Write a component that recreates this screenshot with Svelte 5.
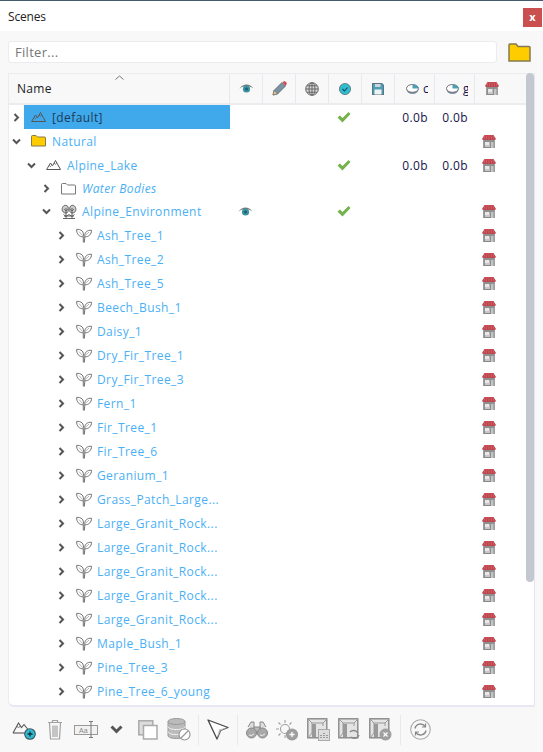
<script lang="ts">
	const trunc = 'Large_Granit_Rock...';
	const leaves = [
		'Ash_Tree_1', 'Ash_Tree_2', 'Ash_Tree_5', 'Beech_Bush_1', 'Daisy_1', 'Dry_Fir_Tree_1',
		'Dry_Fir_Tree_3', 'Fern_1', 'Fir_Tree_1', 'Fir_Tree_6', 'Geranium_1', 'Grass_Patch_Large...',
		trunc, trunc, trunc, trunc, trunc, 'Maple_Bush_1', 'Pine_Tree_3', 'Pine_Tree_6_young'
	];

	const rows = [
		{ name: '[default]', depth: 0, icon: 'scene', open: false, selected: true, check: true, sizes: true, store: false },
		{ name: 'Natural', depth: 0, icon: 'folderFull', open: true, store: true },
		{ name: 'Alpine_Lake', depth: 1, icon: 'scene', open: true, check: true, sizes: true, store: true },
		{ name: 'Water Bodies', depth: 2, icon: 'folder', open: false, italic: true, tight: true, store: false },
		{ name: 'Alpine_Environment', depth: 2, icon: 'trees', open: true, eye: true, check: true, tight: true, store: true },
		...leaves.map((name) => ({ name, depth: 3, icon: 'leaf', open: false, store: true }))
	];
</script>

{#snippet scene()}
	<svg class="ic" width="15" height="12" viewBox="0 0 15 12" fill="none" stroke="#555" stroke-width="1">
		<path d="M.6 10.500 4.500 4l2 2.800L9.500 1.500l5 9z" />
		<path d="M3.200 6.500 4.500 7.500 5.600 6.500M8 4l1.300 1.200L10.800 4" stroke-width=".8" />
	</svg>
{/snippet}

{#snippet folderFull()}
	<svg class="ic" width="15" height="12" viewBox="0 0 15 12">
		<path d="M.5 11V1.500q0-1 1-1h3.500l1.500 1.500h7q1 0 1 1V11z" fill="#fc0" stroke="#8a7a45" />
	</svg>
{/snippet}

{#snippet folder()}
	<svg class="ic" width="15" height="12" viewBox="0 0 15 12">
		<path d="M.5 11V1.500q0-1 1-1h3.500l1.500 1.500h7q1 0 1 1V11z" fill="#fff" stroke="#777" />
	</svg>
{/snippet}

{#snippet trees()}
	<svg class="ic wide" width="16" height="15" viewBox="0 0 16 15" fill="none" stroke="#555" stroke-width=".9">
		<path d="M5 9C1.500 9 .5 6 1.500 3.500 2.500 .8 6 .5 7 3 8 6.500 7 9 5 9z" fill="#ccc" />
		<path d="M11 9c3.500 0 4.500-3 3.500-5.500C13.500 .8 10 .5 9 3 8 6.500 9 9 11 9z" fill="#ccc" />
		<path d="M5 4v10M11 4v10M2 14.500h12M3 12h10M2.500 10.500l2.500 2 3-2 3 2 2.500-2" />
		<path d="M3 5l2 2 2-2M9 5l2 2 2-2" stroke-width=".7" />
	</svg>
{/snippet}

{#snippet leaf()}
	<svg class="ic wide" width="16" height="15" viewBox="0 0 16 15" fill="none" stroke="#6a6a6a" stroke-width=".95">
		<path d="M7.300 14.500V9M8.300 14.500 8.800 9" />
		<path d="M7.200 8.800C3 8.800.6 6 .6 1.500 5 .8 8.500 3.500 7.200 8.800z" />
		<path d="M8.800 8.800c4 .2 6.600-2.500 6.800-6.500C11.400 1.800 8 4.500 8.800 8.800z" />
		<path d="M3 3.500 6.500 7.500M13 4 9.500 7.500" stroke-width=".7" stroke="#999" />
	</svg>
{/snippet}

{#snippet store()}
	<svg class="store" width="14" height="13" viewBox="0 0 14 13">
		<rect x="1.500" y="4" width="11" height="9" fill="#8f8f8f" stroke="#777" stroke-width=".5" />
		<rect x="3" y="7" width="4.500" height="3" fill="#e8e8e8" />
		<rect x="3" y="10.500" width="5" height="1" fill="#fff" />
		<rect x="9" y="7" width="2.500" height="6" fill="#c4c4c4" />
		<path d="M2.500 0h9L14 4q-1 1.500-2.300.7-1 .8-2.200 0-1 .8-2.500 0-1.200.8-2.500 0-1 .8-2.200 0Q1 5.500 0 4z" fill="#b8434b" />
		<path d="M5 .3 4.300 4.500M7 .3v4.300M9 .3l.7 4.200M3 .5 1.800 4.500M11 .5l1.200 4" stroke="#e2636b" stroke-width=".8" />
	</svg>
{/snippet}

{#snippet eye()}
	<svg width="15" height="9" viewBox="0 0 15 9">
		<path d="M.3 5C2.500 1.500 5 .5 7.500 .5s5 1 7.200 4.500C12.500 2.800 10 2 7.500 2S2.500 2.800 .3 5z" fill="#777" />
		<circle cx="7.500" cy="5" r="3.600" fill="#3a93a3" />
		<circle cx="7.500" cy="5" r="1.500" fill="#1f5f6e" />
	</svg>
{/snippet}

{#snippet pie(letter)}
	<span class="pie">
		<svg width="13" height="10" viewBox="0 0 13 10">
			<ellipse cx="6.500" cy="5.500" rx="6" ry="4.500" fill="#7f8f9b" />
			<ellipse cx="6.500" cy="4.400" rx="6" ry="3.900" fill="#fff" stroke="#667" stroke-width=".9" />
			<path d="M6.500 4.400V.5a6 3.900 0 0 1 6 3.900z" fill="#4c9fb2" />
		</svg>
		<span class="pie-letter">{letter}</span>
	</span>
{/snippet}

<div class="panel">
	<header class="title">
		<span>Scenes</span>
		<button class="close">x</button>
	</header>

	<div class="filter-row">
		<input class="filter" placeholder="Filter..." />
		<svg class="browse" width="23" height="19" viewBox="0 0 23 19">
			<path d="M1 18V2q0-1 1-1h6l2 2.500h11q1 0 1 1V18z" fill="#fc0" stroke="#85794f" stroke-width="1.500" />
		</svg>
	</div>

	<div class="tree">
		<div class="head grid">
			<div class="col name">
				<svg class="sort" width="9" height="5" viewBox="0 0 9 5" fill="none" stroke="#777"><path d="M.5 4.500l4-3.500 4 3.500" /></svg>
				Name
			</div>
			<div class="col">{@render eye()}</div>
			<div class="col">
				<svg width="15" height="15" viewBox="0 0 15 15">
					<path d="M1 14l1-4.500L10 1.500 13.500 5 5.500 13z" fill="#7d93a3" stroke="#4f5d68" stroke-width=".8" />
					<path d="M1 14l1-4.500L5.500 13z" fill="#e8c89c" stroke="#665" stroke-width=".5" />
					<path d="M10.500 1 12 .3q1-.3 2 .7t.7 2L13.500 5z" fill="#d4484e" />
				</svg>
			</div>
			<div class="col">
				<svg width="14" height="14" viewBox="0 0 14 14" fill="#d8d8d8" stroke="#666" stroke-width="1">
					<circle cx="7" cy="7" r="6.300" />
					<ellipse cx="7" cy="7" rx="3" ry="6.300" fill="none" />
					<path d="M7 1v12M1 7h12M2 3.800h10M2 10.200h10" fill="none" />
				</svg>
			</div>
			<div class="col">
				<svg width="12" height="12" viewBox="0 0 12 12">
					<circle cx="6" cy="6" r="5.600" fill="#2fbcd0" stroke="#566" stroke-width=".7" />
					<path d="M3.500 6l2 2 3-3.500" fill="none" stroke="#164a5c" stroke-width="1.100" />
				</svg>
			</div>
			<div class="col">
				<svg width="12" height="12" viewBox="0 0 12 12">
					<path d="M0 0h10l2 2v10H0z" fill="#4c9fb2" />
					<path d="M.5 .5h9.300l1.700 1.700v9.300H.5z" fill="none" stroke="#667" stroke-width=".8" />
					<rect x="3" y="1" width="5.500" height="3" fill="#cfd6da" />
					<rect x="2.500" y="6.500" width="7" height="5" fill="#eef3f5" />
				</svg>
			</div>
			<div class="col pct">{@render pie('c')}</div>
			<div class="col pct">{@render pie('g')}</div>
			<div class="col">{@render store()}</div>
		</div>

		<div class="rows">
			{#each rows as row}
				<div class="row grid" class:tight={row.tight}>
					<div class="name-cell" style="padding-left: {row.depth * 15}px">
						<svg class="chev" width="15" height="9" viewBox="0 0 15 9" fill="none" stroke="#555" stroke-width="2">
							{#if row.open}<path d="M4 2.500l3.500 3.500L11 2.500" />{:else}<path d="M5.500 1l3.500 3.500L5.500 8" />{/if}
						</svg>
						<div class="label" class:selected={row.selected} class:italic={row.italic}>
							{#if row.icon === 'scene'}{@render scene()}
							{:else if row.icon === 'folderFull'}{@render folderFull()}
							{:else if row.icon === 'folder'}{@render folder()}
							{:else if row.icon === 'trees'}{@render trees()}
							{:else}{@render leaf()}{/if}
							<span class="text">{row.name}</span>
						</div>
					</div>
					<div class="val eye-val">{#if row.eye}{@render eye()}{/if}</div>
					<div class="val"></div>
					<div class="val"></div>
					<div class="val check-val">
						{#if row.check}<svg width="14" height="11" viewBox="0 0 14 11"><path d="M.5 5.500 3 3.500l2.500 2.500L11.500 0 13.500 2 5.500 10.500z" fill="#76b24c" /></svg>{/if}
					</div>
					<div class="val"></div>
					<div class="val size">{row.sizes ? '0.0b' : ''}</div>
					<div class="val size">{row.sizes ? '0.0b' : ''}</div>
					<div class="val">{#if row.store}{@render store()}{/if}</div>
				</div>
			{/each}
		</div>

		<div class="scroll"></div>
	</div>

	<div class="toolbar">
		<span class="tb">
			<svg width="24" height="21" viewBox="0 0 24 21" fill="none" stroke="#555" stroke-width="1.100">
				<path d="M1 14 6.500 4l3 4.500L12 5.500 18 13" />
				<path d="M1 14h12" />
				<path d="M4.800 7.500l1.700 1 1.500-1" stroke-width=".8" />
				<circle cx="18" cy="15" r="5.300" fill="#2fbcd0" stroke="#3c5560" />
				<path d="M15.500 15h5M18 12.500v5" stroke="#16323c" stroke-width="1.300" />
			</svg>
		</span>
		<span class="tb">
			<svg width="16" height="21" viewBox="0 0 16 21" fill="none" stroke="#a2a2a2" stroke-width="1.200">
				<path d="M1 3.500h14M5.500 3V1.500h5V3M2.500 4l1 16h9l1-16M6 6.500V18M8 6.500V18M10 6.500V18" />
			</svg>
		</span>
		<span class="tb">
			<svg width="24" height="17" viewBox="0 0 24 17">
				<rect x=".5" y="4.500" width="23" height="9" fill="#f2f2f2" stroke="#999" />
				<text x="5" y="12" font-size="7" fill="#888" font-family="Liberation Sans">Aa</text>
				<path d="M17 1v15M15 .5h4M15 16.500h4" stroke="#777" fill="none" />
			</svg>
		</span>
		<span class="tb">
			<svg width="13" height="9" viewBox="0 0 13 9" fill="none" stroke="#555" stroke-width="3"><path d="M1.500 1.500l5 5 5-5" /></svg>
		</span>
		<span class="tb">
			<svg width="20" height="20" viewBox="0 0 20 20">
				<rect x=".8" y=".8" width="14" height="14" fill="#ddd" stroke="#aaa" stroke-width="1.500" />
				<rect x="5.500" y="5.500" width="13.500" height="13.500" fill="#fff" stroke="#aaa" stroke-width="1.500" />
			</svg>
		</span>
		<span class="tb">
			<svg width="24" height="23" viewBox="0 0 24 23">
				<g fill="#bbb" stroke="#999">
					<path d="M1 3.500v14c0 2 4 3 8.500 3s8.500-1 8.500-3v-14z" />
					<ellipse cx="9.500" cy="3.500" rx="8.500" ry="3" />
				</g>
				<path d="M1 8.500c0 2 4 3 8.500 3s8.500-1 8.500-3M1 13.500c0 2 4 3 8.500 3s8.500-1 8.500-3" fill="none" stroke="#f5f5f5" />
				<circle cx="17.500" cy="16.500" r="5.500" fill="#fff" stroke="#999" stroke-width="1.200" />
				<path d="M14 20l7-7" stroke="#999" stroke-width="1.200" />
			</svg>
		</span>
		<span class="sep"></span>
		<span class="tb">
			<svg width="22" height="21" viewBox="0 0 22 21">
				<path d="M1 1l20 7.500-7.500 3L10 20z" fill="#fff" stroke="#444" stroke-width="1.300" stroke-linejoin="round" />
				<path d="M21 8.500l-7.500 3L10 20l2-9.500z" fill="#bbb" />
			</svg>
		</span>
		<span class="sep second"></span>
		<span class="tb">
			<svg width="22" height="18" viewBox="0 0 22 18" fill="#a8a8a8" stroke="#888">
				<path d="M2 6 5 1h3v7M20 6l-3-5h-3v7" fill="#ddd" />
				<rect x="8" y="6" width="6" height="5" fill="#bbb" />
				<circle cx="5.500" cy="12" r="5" />
				<circle cx="16.500" cy="12" r="5" />
				<path d="M3 14q2 1.500 5-1M14 14q2 1.500 5-1" fill="none" stroke="#eee" />
			</svg>
		</span>
		<span class="tb">
			<svg width="23" height="22" viewBox="0 0 23 22" fill="none" stroke="#a0a0a0" stroke-width="1.100">
				<circle cx="9" cy="10" r="4.500" />
				<path d="M9 1v3M9 16v3M0 10h3M2.500 3.500l2 2M15.500 3.500l-2 2M2.500 16.500l2-2" />
				<circle cx="16" cy="15.500" r="5.500" fill="#a0a0a0" stroke="#999" />
				<path d="M13.500 15.500h5M16 13v5" stroke="#fff" stroke-width="1.300" />
			</svg>
		</span>
		<span class="tb">
			<svg width="23" height="23" viewBox="0 0 23 23">
				<rect x=".8" y=".8" width="19" height="19" fill="#e4e4e4" stroke="#888" stroke-width="1.400" />
				<path d="M1 1l4 4h11l4-4M5 5v10L1 20M16 5v3" fill="none" stroke="#999" />
				<rect x="5" y="6" width="4" height="13" fill="#999" />
				<rect x="11.500" y="11.500" width="11" height="11" fill="#ddd" stroke="#aaa" />
				<path d="M14 20v-3M17 20v-6M20 20v-4" stroke="#777" stroke-width="1.300" stroke-dasharray="1 1" />
			</svg>
		</span>
		<span class="tb">
			<svg width="23" height="23" viewBox="0 0 23 23">
				<rect x=".8" y=".8" width="19" height="19" fill="#e4e4e4" stroke="#888" stroke-width="1.400" />
				<path d="M1 1l4 4h11l4-4M5 5v10L1 20M16 5v3" fill="none" stroke="#999" />
				<rect x="5" y="6" width="4" height="13" fill="#999" />
				<path d="M12 14a5 5 0 0 1 8 1M21 17a5 5 0 0 1-8 2" fill="none" stroke="#888" stroke-width="1.400" />
			</svg>
		</span>
		<span class="tb">
			<svg width="23" height="23" viewBox="0 0 23 23">
				<rect x=".8" y=".8" width="19" height="19" fill="#e4e4e4" stroke="#888" stroke-width="1.400" />
				<path d="M1 1l4 4h11l4-4M5 5v10L1 20M16 5v3" fill="none" stroke="#999" />
				<rect x="5" y="6" width="4" height="13" fill="#999" />
				<circle cx="16.500" cy="16.500" r="5.500" fill="#a0a0a0" stroke="#999" />
				<path d="M14.500 14.500l4 4M18.500 14.500l-4 4" stroke="#fff" stroke-width="1.100" />
			</svg>
		</span>
		<span class="sep third"></span>
		<span class="tb">
			<svg width="21" height="21" viewBox="0 0 21 21" fill="none" stroke="#888" stroke-width="1.100">
				<circle cx="10.500" cy="10.500" r="9.800" stroke="#aaa" />
				<path d="M5 9.500A5.500 5.500 0 0 1 15 7.500M16 11.500A5.500 5.500 0 0 1 6 13.500" stroke-width="1.400" />
				<path d="M15.500 4.500v3.500H12M5.500 16.500V13H9" stroke-width="1.200" />
			</svg>
		</span>
	</div>
</div>

<style>
	:global(body) {
		margin: 0;
		overflow: hidden;
	}

	:global(*) {
		box-sizing: border-box;
	}

	.panel {
		--cols: 221px 33px 33px 33px 33px 33px 40px 40px 52px;
		width: 543px;
		height: 752px;
		display: flex;
		flex-direction: column;
		background: #f8f8f9;
		border-top: 1px solid #46596a;
		font-family: 'Open Sans', sans-serif;
		font-size: 12px;
		color: #222;
		overflow: hidden;
	}

	.title {
		height: 30px;
		flex: none;
		display: flex;
		align-items: center;
		justify-content: space-between;
		padding: 0 1px 0 8px;
		background: #fff;
		letter-spacing: -0.2px;
	}

	.close {
		width: 19px;
		height: 19px;
		margin-top: 3px;
		padding: 0 0 2px;
		border: 0;
		background: #c9504f;
		color: #fff;
		font: bold 11px 'Open Sans', sans-serif;
	}

	.filter-row {
		display: flex;
		align-items: center;
		gap: 11px;
		height: 42px;
		padding: 0 12px 0 8px;
	}

	.filter {
		width: 489px;
		height: 22px;
		padding: 0 6px;
		border: 1px solid #ebebf0;
		border-radius: 3px;
		background: #fff;
		font: 13px 'Open Sans', sans-serif;
		letter-spacing: 0.3px;
		outline: none;
	}

	.filter::placeholder {
		color: #777;
		opacity: 1;
	}

	.tree {
		position: relative;
		flex: none;
		width: 527px;
		height: 634px;
		margin-left: 8px;
		background: #fff;
		border-left: 1px solid #ebebf0;
		border-right: 1px solid #e6e6f0;
		border-bottom: 2px solid #e8e8f2;
		border-radius: 0 0 0 6px;
		overflow: hidden;
	}

	.grid {
		display: grid;
		grid-template-columns: var(--cols);
	}

	.head {
		height: 32px;
		background: #f8f8f9;
		border-top: 1px solid #ebebf0;
		border-bottom: 2px solid #ebebf0;
	}

	.col {
		display: flex;
		align-items: center;
		justify-content: center;
		border-right: 1px solid #e6e9ee;
	}

	.col:last-child {
		border-right: 0;
		padding-right: 18px;
	}

	.col.name {
		position: relative;
		justify-content: flex-start;
		padding: 0 0 0 8px;
		letter-spacing: 0.3px;
	}

	.sort {
		position: absolute;
		left: 106px;
		top: 1px;
	}

	.pie {
		display: flex;
		align-items: center;
		width: 100%;
		padding-left: 11px;
		gap: 4px;
	}

	.pie-letter {
		width: 5px;
		overflow: hidden;
		font-size: 12px;
		color: #14144a;
	}

	.row {
		height: 24px;
		align-items: center;
	}

	.row.tight {
		height: 23px;
	}

	.name-cell {
		display: flex;
		align-items: center;
		height: 100%;
		min-width: 0;
	}

	.chev {
		flex: none;
	}

	.label {
		flex: 1;
		height: 100%;
		display: flex;
		align-items: center;
		gap: 6px;
		padding-left: 7px;
		min-width: 0;
		color: #4ab0f5;
		letter-spacing: 0.4px;
	}

	.label.selected {
		background: #3fa9eb;
		color: #1d3a58;
	}

	.label.italic .text {
		font-style: italic;
	}

	.text {
		white-space: nowrap;
	}

	.ic {
		flex: none;
	}

	.ic.wide {
		margin-right: -1px;
	}

	.val {
		display: flex;
		align-items: center;
		justify-content: center;
		height: 100%;
	}

	.val:last-child {
		padding-right: 25px;
	}

	.eye-val {
		padding-right: 3px;
	}

	.check-val {
		padding-right: 4px;
	}

	.size {
		justify-content: flex-end;
		padding-right: 7px;
		color: #14144a;
		letter-spacing: 0.4px;
	}

	.scroll {
		position: absolute;
		top: 0;
		right: 0;
		width: 8px;
		height: 509px;
		background: #c3c8d0;
		border-radius: 4px;
	}

	.toolbar {
		flex: 1;
		display: flex;
		align-items: center;
		padding-left: 8px;
	}

	.tb {
		flex: none;
		width: 31px;
		height: 24px;
		display: flex;
		align-items: center;
		justify-content: center;
	}

	.sep {
		flex: none;
		width: 1px;
		height: 30px;
		margin: 0 3px 0 4px;
		background: #e8e8ee;
	}

	.sep.third {
		margin: 0 4px;
	}
</style>
